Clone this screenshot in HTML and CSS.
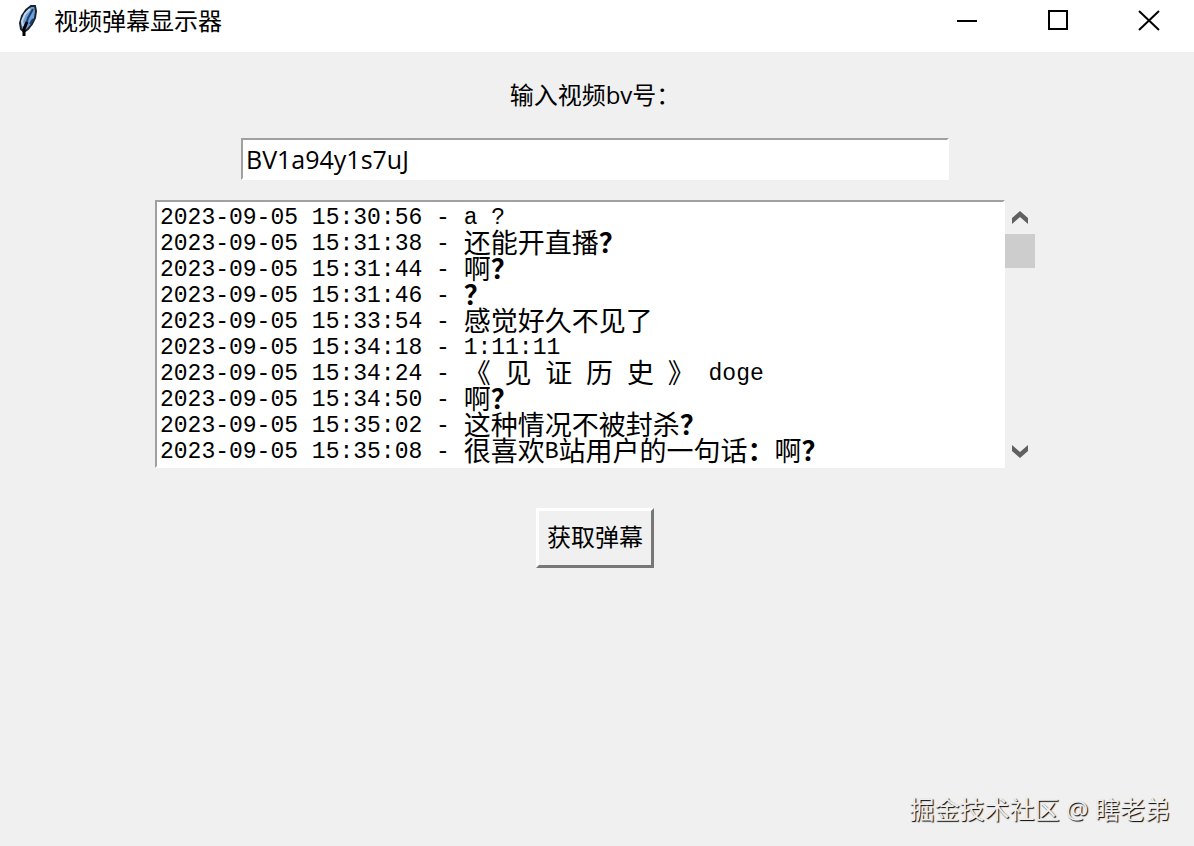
FILE: index.html
```html
<!DOCTYPE html>
<html lang="zh-CN">
<head>
  <meta charset="UTF-8" />
  <meta name="viewport" content="width=device-width, initial-scale=1" />
  <title>视频弹幕显示器</title>
  <link rel="stylesheet" href="styles.css">
</head>
<body>

  <header class="titlebar">
    <svg class="feather" viewBox="0 0 20 34" aria-hidden="true">
      <path d="M6 28 L3 25 L2 19 L4 12 L8 6 L13 2 L17 2 L18 7 L17 14 L14 20 L10 25 Z" fill="#6f9fd6" stroke="#1c222c" stroke-width="2" />
      <path d="M5 22 L4 17 L7 10 L12 5" fill="none" stroke="#c3d6ea" stroke-width="2" />
      <path d="M15 5 L10 14 L7 24 M12 20 L15 15" fill="none" stroke="#1b3f70" stroke-width="2" />
      <path d="M6 32 L6 25 L9 18" fill="none" stroke="#000" stroke-width="3" />
    </svg>
    <h1>视频弹幕显示器</h1>
    <div class="window-buttons">
      <button type="button" aria-label="最小化">
        <svg viewBox="0 0 22 22"><path d="M1 11H21" /></svg>
      </button>
      <button type="button" aria-label="最大化">
        <svg viewBox="0 0 22 22"><path d="M2 1H20V19H2Z" /></svg>
      </button>
      <button type="button" aria-label="关闭">
        <svg viewBox="0 0 22 22"><path d="M1 1L21 20M21 1L1 20" /></svg>
      </button>
    </div>
  </header>

  <main>
    <label for="bv">输入视频bv号：</label>
    <input type="text" id="bv" value="BV1a94y1s7uJ" spellcheck="false" />

    <div class="log-box">
      <div class="log" role="log">
        <p>2023-09-05 15:30:56 - a ?</p>
        <p>2023-09-05 15:31:38 - <span>还能开直播<b>？</b></span></p>
        <p>2023-09-05 15:31:44 - <span>啊<b>？</b></span></p>
        <p>2023-09-05 15:31:46 - <span><b>？</b></span></p>
        <p>2023-09-05 15:33:54 - <span>感觉好久不见了</span></p>
        <p>2023-09-05 15:34:18 - 1:11:11</p>
        <p>2023-09-05 15:34:24 - <span>《</span> <span>见</span> <span>证</span> <span>历</span> <span>史</span> <span>》</span> doge</p>
        <p>2023-09-05 15:34:50 - <span>啊<b>？</b></span></p>
        <p>2023-09-05 15:35:02 - <span>这种情况不被封杀<b>？</b></span></p>
        <p>2023-09-05 15:35:08 - <span>很喜欢</span>B<span>站用户的一句话<b>：</b>啊<b>？</b></span></p>
      </div>
      <div class="scrollbar">
        <button type="button" aria-label="向上滚动">
          <svg viewBox="0 0 16 14"><path d="M0 14V8L8 1L16 8V14L8 7Z" /></svg>
        </button>
        <div class="thumb"></div>
        <button type="button" class="down" aria-label="向下滚动">
          <svg viewBox="0 0 16 14"><path d="M0 1V7L8 14L16 7V1L8 8Z" /></svg>
        </button>
      </div>
    </div>

    <button type="button" class="fetch">获取弹幕</button>
  </main>

  <footer>掘金技术社区 @ 瞎老弟</footer>

</body>
</html>
```
FILE: styles.css
```css
* {
  box-sizing: border-box;
}

body {
  margin: 0;
  min-height: 100vh;
  display: flex;
  flex-direction: column;
  background: #f0f0f0;
  color: #000;
  font-family: "Open Sans", "Noto Sans CJK SC", sans-serif;
  font-size: 24px;
}

button {
  padding: 0;
  border: none;
  background: none;
  color: inherit;
  font: inherit;
}

svg {
  display: block;
}

/* title bar */
.titlebar {
  display: flex;
  align-items: center;
  height: 52px;
  padding: 0 0 10px 18px;
  background: #fff;
}

.feather {
  width: 20px;
  height: 34px;
}

h1 {
  flex: 1;
  margin: 0 0 0 16px;
  font-size: 24px;
  font-weight: 400;
  line-height: 36px;
}

.window-buttons {
  display: flex;
}

.window-buttons button {
  width: 91px;
  height: 42px;
  display: flex;
  justify-content: center;
  align-items: center;
}

.window-buttons svg {
  width: 22px;
  height: 22px;
  fill: none;
  stroke: #000;
  stroke-width: 2;
}

main {
  flex: 1;
  display: flex;
  flex-direction: column;
  align-items: center;
  padding: 24px 4px 0 0;
}

label {
  line-height: 38px;
}

input {
  width: 60%;
  max-width: 708px;
  height: 42px;
  margin: 24px 0 20px;
  padding: 0 3px;
  border: 2px solid;
  border-color: #a0a0a0 #fff #fff #a0a0a0;
  border-radius: 0;
  outline: none;
  background: #fff;
  color: #000;
  font-family: inherit;
  font-size: 25px;
}

/* log + scrollbar */
.log-box {
  display: flex;
  width: 74%;
  max-width: 880px;
}

.log {
  flex: 1;
  padding: 3px 2px 1px 3px;
  border: 2px solid;
  border-color: #a0a0a0 #fff #fff #a0a0a0;
  background: #fff;
  font-family: "Liberation Mono", "Noto Sans CJK SC", monospace;
  font-size: 23px;
  line-height: 26px;
}

.log p {
  height: 26px;
  margin: 0;
  white-space: pre;
}

/* full-width characters take two columns */
.log span {
  font-family: "Noto Sans CJK SC", sans-serif;
  font-size: 27px;
  line-height: 22px;
  vertical-align: top;
}

.scrollbar {
  display: flex;
  flex-direction: column;
  width: 30px;
}

.scrollbar button {
  display: flex;
  justify-content: center;
  align-items: center;
  height: 34px;
}

.scrollbar svg {
  width: 16px;
  height: 14px;
  fill: #606060;
}

.thumb {
  height: 34px;
  background: #cdcdcd;
}

.scrollbar .down {
  margin-top: auto;
}

.fetch {
  height: 60px;
  margin-top: 40px;
  padding: 0 8px 6px;
  border: 3px solid;
  border-color: #fff #777 #777 #fff;
}

footer {
  padding: 0 24px 18px;
  color: #eee;
  font-size: 25px;
  line-height: 38px;
  text-align: right;
  text-shadow: 1px 1px 1px #000;
}
```
